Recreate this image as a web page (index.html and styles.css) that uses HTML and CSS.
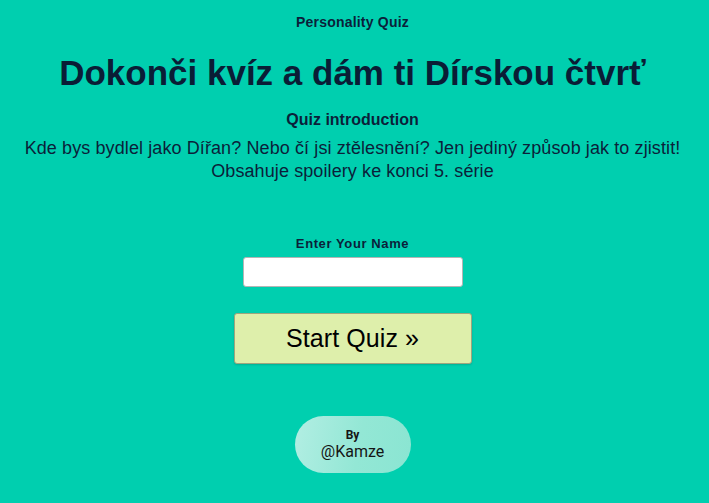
FILE: index.html
```html
<!DOCTYPE html>
<html lang="cs">
<head>
<meta charset="utf-8">
<title>Personality Quiz</title>
<link rel="stylesheet" href="styles.css">
</head>
<body>
<main class="page">
  <div class="kicker">Personality Quiz</div>
  <h1 class="title">Dokonči kvíz a dám ti Dírskou čtvrť</h1>
  <h2 class="intro-head">Quiz introduction</h2>
  <p class="intro">Kde bys bydlel jako Dířan? Nebo čí jsi ztělesnění? Jen jediný způsob jak to zjistit!<br>Obsahuje spoilery ke konci 5. série</p>
  <form class="form">
    <label class="label" for="name">Enter Your Name</label>
    <input class="input" id="name" type="text">
    <button class="start" type="button">Start Quiz »</button>
  </form>
  <div class="by">
    <span class="by-small">By</span>
    <span class="by-name">@Kamze</span>
  </div>
</main>
</body>
</html>
```
FILE: styles.css
```css
html, body {
  margin: 0;
  padding: 0;
  background: #00cfaf;
}
body {
  font-family: "Liberation Sans", Arial, sans-serif;
  color: #0b1f3a;
}
.page {
  display: flex;
  flex-direction: column;
  align-items: center;
  text-align: center;
  padding: 14px 4px 0 0;
}
.kicker {
  font-size: 14px;
  font-weight: bold;
  line-height: 16px;
  letter-spacing: 0.2px;
}
.title {
  margin: 23px 0 0;
  font-size: 35px;
  line-height: 40px;
  font-weight: bold;
  color: #0a1d36;
}
.intro-head {
  margin: 18px 0 0;
  font-size: 16px;
  line-height: 18px;
  font-weight: bold;
}
.intro {
  margin: 8px 0 0;
  font-size: 18px;
  line-height: 23px;
  letter-spacing: 0.1px;
}
.form {
  display: flex;
  flex-direction: column;
  align-items: center;
  margin-top: 53px;
}
.label {
  font-size: 13px;
  font-weight: bold;
  line-height: 15px;
  letter-spacing: 0.6px;
}
.input {
  margin: 6px 0 0;
  width: 220px;
  height: 30px;
  box-sizing: border-box;
  border: 1px solid #b5b5b5;
  border-radius: 3px;
  background: #fff;
}
.start {
  margin-top: 26px;
  width: 238px;
  height: 51px;
  box-sizing: border-box;
  border: 1px solid #9ea57e;
  border-radius: 3px;
  background: #deefab;
  color: #000;
  font-family: "Liberation Sans", Arial, sans-serif;
  font-size: 25px;
  letter-spacing: 0.1px;
  box-shadow: 0 1px 2px rgba(0,0,0,0.15);
}
.by {
  margin-top: 52px;
  width: 116px;
  height: 57px;
  border-radius: 29px;
  background: linear-gradient(100deg, #b2eee3 0%, #93e7d5 55%, #8ae5d2 100%);
  display: flex;
  flex-direction: column;
  align-items: center;
  justify-content: center;
  font-family: Roboto, sans-serif;
  color: #151515;
}
.by-small {
  font-size: 12px;
  font-weight: bold;
  line-height: 14px;
}
.by-name {
  font-size: 16px;
  line-height: 19px;
}
```
